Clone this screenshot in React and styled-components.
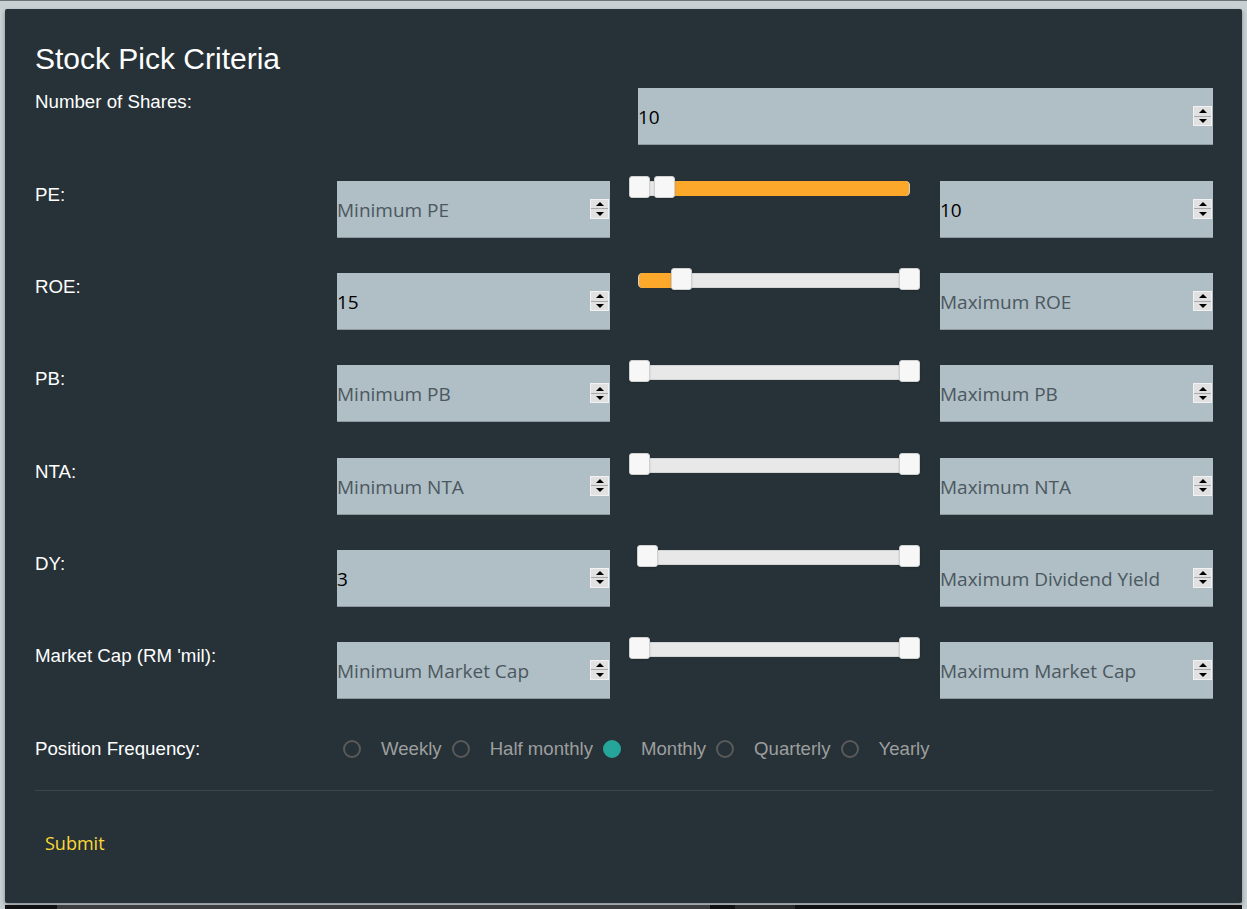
import styled, { createGlobalStyle } from "styled-components";

const GlobalStyle = createGlobalStyle`
  html, body {
    margin: 0;
    padding: 0;
    background: #c8d0d4;
  }
  * { box-sizing: border-box; }
`;

const criteria = [
  { label: "PE:", min: "", max: "10", minHint: "Minimum PE", maxHint: "Maximum PE", lo: 0, hi: 9.6 },
  { label: "ROE:", min: "15", max: "", minHint: "Minimum ROE", maxHint: "Maximum ROE", lo: 15.8, hi: 100 },
  { label: "PB:", min: "", max: "", minHint: "Minimum PB", maxHint: "Maximum PB", lo: 0, hi: 100 },
  { label: "NTA:", min: "", max: "", minHint: "Minimum NTA", maxHint: "Maximum NTA", lo: 0, hi: 100 },
  { label: "DY:", min: "3", max: "", minHint: "Minimum Dividend Yield", maxHint: "Maximum Dividend Yield", lo: 3.3, hi: 100 },
  { label: "Market Cap (RM 'mil):", min: "", max: "", minHint: "Minimum Market Cap", maxHint: "Maximum Market Cap", lo: 0, hi: 100 },
];

const frequencies = ["Weekly", "Half monthly", "Monthly", "Quarterly", "Yearly"];

const NumberField = ({ value, hint, wide }) => (
  <Field $wide={wide}>
    <Input type="text" defaultValue={value} placeholder={hint} />
    <Spinner>
      <SpinButton $dir="up" />
      <SpinButton $dir="down" />
    </Spinner>
  </Field>
);

const RangeSlider = ({ lo, hi }) => (
  <SliderCell>
    <Track>
      <Fill style={{ left: 0, width: `${lo}%` }} />
      <Fill style={{ left: `${hi}%`, right: 0 }} />
      <Thumb style={{ left: `${lo}%` }} />
      <Thumb style={{ left: `${hi}%` }} />
    </Track>
  </SliderCell>
);

const App = () => {
  return (
    <Page>
      <GlobalStyle />
      <Card>
        <Title>Stock Pick Criteria</Title>
        <Rows>
          <Row $first>
            <Label>Number of Shares:</Label>
            <NumberField value="10" wide />
          </Row>
          {criteria.map((c) => (
            <Row key={c.label}>
              <Label>{c.label}</Label>
              <NumberField value={c.min} hint={c.minHint} />
              <RangeSlider lo={c.lo} hi={c.hi} />
              <NumberField value={c.max} hint={c.maxHint} />
            </Row>
          ))}
          <Row $radio>
            <Label>Position Frequency:</Label>
            <RadioGroup>
              {frequencies.map((f) => (
                <RadioItem key={f}>
                  <Circle $checked={f === "Monthly"} />
                  <RadioText>{f}</RadioText>
                </RadioItem>
              ))}
            </RadioGroup>
          </Row>
        </Rows>
        <Divider />
        <SubmitButton type="button">Submit</SubmitButton>
      </Card>
      <ScrollStrip>
        <ScrollThumb />
        <ScrollMark />
      </ScrollStrip>
    </Page>
  );
};

export default App;

const Page = styled.div`
  height: 909px;
  padding: 8px 5px 0 5px;
  border-top: 1px solid #6b7378;
  display: flex;
  flex-direction: column;
  overflow: hidden;
`;

const Card = styled.div`
  height: 894px;
  flex-shrink: 0;
  background: #263238;
  border-radius: 2px;
  box-shadow: 0 2px 4px rgba(0, 0, 0, 0.35);
  padding: 33px 29px 0 30px;
  display: flex;
  flex-direction: column;
`;

const Title = styled.h4`
  margin: 0 0 13px 0;
  font-family: "Liberation Sans", Arial, sans-serif;
  font-weight: 400;
  font-size: 30px;
  line-height: 33px;
  color: #ffffff;
`;

const Rows = styled.div`
  display: flex;
  flex-direction: column;
  gap: 35.2px;
`;

const Row = styled.div`
  display: grid;
  grid-template-columns: 302px 273px 330px 273px;
  align-items: ${({ $radio }) => ($radio ? "center" : "start")};
  height: ${({ $radio }) => ($radio ? "30px" : "57px")};
  margin-bottom: ${({ $first }) => ($first ? "0.8px" : "0")};
`;

const Label = styled.div`
  font-family: "Liberation Sans", Arial, sans-serif;
  font-size: 18.7px;
  line-height: 28px;
  color: #ffffff;
`;

const Field = styled.div`
  display: flex;
  align-items: center;
  height: 57px;
  background: #b0bec5;
  border-bottom: 1px solid #8d999f;
  grid-column: ${({ $wide }) => ($wide ? "3 / 5" : "auto")};
  margin-left: ${({ $wide }) => ($wide ? "28px" : "0")};
`;

const Input = styled.input`
  flex: 1;
  min-width: 0;
  height: 100%;
  border: none;
  outline: none;
  background: transparent;
  padding: 2px 0 0 0;
  font-family: "Open Sans", "Noto Sans", sans-serif;
  font-size: 19px;
  color: #000000;

  &::placeholder {
    color: #4b5860;
    opacity: 1;
  }
`;

const Spinner = styled.div`
  width: 19px;
  height: 20px;
  margin-right: 1px;
  border: 1px solid #f2f2f2;
  background: #a9a9a9;
  display: flex;
  flex-direction: column;
  gap: 1px;
`;

const SpinButton = styled.div`
  flex: 1;
  background: #e1e1e1;
  display: flex;
  align-items: center;
  justify-content: center;

  &::after {
    content: "";
    width: 0;
    height: 0;
    border-left: 4px solid transparent;
    border-right: 4px solid transparent;
    ${({ $dir }) =>
      $dir === "up" ? "border-bottom: 4px solid #000;" : "border-top: 4px solid #000;"}
  }
`;

const SliderCell = styled.div`
  padding: 0 30px 0 28px;
`;

const Track = styled.div`
  position: relative;
  height: 15px;
  background: #e8e8e8;
  border: 1px solid #d3d3d3;
  border-radius: 4px;
`;

const Fill = styled.div`
  position: absolute;
  top: -1px;
  bottom: -1px;
  background: #fca82a;
  border-radius: 4px;
`;

const Thumb = styled.div`
  position: absolute;
  top: -6px;
  width: 21px;
  height: 22px;
  margin-left: -10.5px;
  background: #f7f7f7;
  border: 1px solid #d0d0d0;
  border-radius: 3px;
  box-shadow: inset 0 0 1px #fff, 0 1px 2px rgba(0, 0, 0, 0.15);
`;

const RadioGroup = styled.div`
  grid-column: 2 / 5;
  display: flex;
  align-items: center;
  padding-left: 6px;
`;

const RadioItem = styled.label`
  display: flex;
  align-items: center;
  cursor: pointer;
`;

const Circle = styled.span`
  width: 18px;
  height: 18px;
  border-radius: 50%;
  border: 2px solid ${({ $checked }) => ($checked ? "#26a69a" : "#5a5a5a")};
  background: ${({ $checked }) => ($checked ? "#26a69a" : "transparent")};
  margin-right: 20px;
  flex-shrink: 0;
`;

const RadioText = styled.span`
  font-family: "Liberation Sans", Arial, sans-serif;
  font-size: 18.6px;
  line-height: 30px;
  color: #9e9e9e;
  margin-right: 10px;
`;

const Divider = styled.div`
  height: 1px;
  background: #3a464d;
  margin-top: 26px;
`;

const SubmitButton = styled.button`
  align-self: flex-start;
  margin-top: 34px;
  height: 36px;
  padding: 0 10px;
  border: none;
  background: transparent;
  font-family: "Open Sans", "Noto Sans", sans-serif;
  font-size: 18px;
  color: #fdd835;
  cursor: pointer;
`;

const ScrollStrip = styled.div`
  margin-top: 2px;
  height: 6px;
  background: #111111;
  display: flex;
  padding-left: 52px;
  gap: 25px;
`;

const ScrollThumb = styled.div`
  width: 653px;
  background: #3d3d3d;
`;

const ScrollMark = styled.div`
  width: 60px;
  background: #2a2a2a;
`;
